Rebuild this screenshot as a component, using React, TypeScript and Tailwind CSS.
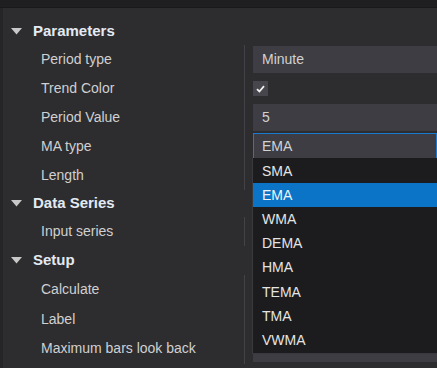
import React from "react";

type Row = { label: string; value?: React.ReactNode; h?: string };

const boxCls = "h-[27px] w-full bg-[#3e3d44] flex items-center pl-[9px] text-[14px] text-[#d2d2d2]";

function Caret() {
  return (
    <svg width="11" height="7" viewBox="0 0 11 7" className="shrink-0">
      <polygon points="0,0 11,0 5.5,6.5" fill="#c8c8c8" />
    </svg>
  );
}

function Header({ title, h = "h-[28px]" }: { title: string; h?: string }) {
  return (
    <div className={`${h} flex items-center pl-[8px]`}>
      <Caret />
      <span className="ml-[11px] text-[15px] font-bold text-[#e3eaf3]">{title}</span>
    </div>
  );
}

function PropRow({ label, value, h = "h-[29px]" }: Row) {
  return (
    <div className={`${h} flex`}>
      <div className="w-[242px] shrink-0 border-r border-[#424247] flex items-center pl-[38px] text-[14px] text-[#d0d0d0]">
        {label}
      </div>
      <div className="flex-1 flex items-center pl-[8px]">{value}</div>
    </div>
  );
}

const maTypes = ["SMA", "EMA", "WMA", "DEMA", "HMA", "TEMA", "TMA", "VWMA"];

export default function App() {
  return (
    <div className="relative w-[437px] h-[368px] overflow-hidden bg-[#2d2d30] font-['Liberation_Sans',Arial,sans-serif]">
      <div className="h-[8px] bg-[#1f1f21] border-b border-[#19191a]" />
      <div className="border-l-[3px] border-[#252527] h-[360px] pt-[9px]">
        <Header title="Parameters" />
        <PropRow label="Period type" value={<div className={boxCls}>Minute</div>} />
        <PropRow
          label="Trend Color"
          value={
            <div className="w-[15px] h-[15px] bg-[#47464c] flex items-center justify-center">
              <svg width="9" height="8" viewBox="0 0 9 8">
                <path d="M1 4.2 L3.4 6.5 L8 1.2" stroke="#f0f0f0" strokeWidth="1.8" fill="none" />
              </svg>
            </div>
          }
        />
        <PropRow label="Period Value" value={<div className={boxCls}>5</div>} />
        <PropRow
          label="MA type"
          value={
            <div className="h-[27px] w-full bg-[#3e3d44] border border-[#1a7bd0] flex items-center pl-[8px] text-[14px] text-[#d2d2d2]">
              EMA
            </div>
          }
        />
        <PropRow label="Length" value={<div className={boxCls} />} />
        <Header title="Data Series" h="h-[27px]" />
        <PropRow label="Input series" value={<div className={boxCls} />} />
        <Header title="Setup" h="h-[29px]" />
        <PropRow label="Calculate" h="h-[29.5px]" value={<div className={boxCls} />} />
        <PropRow label="Label" h="h-[29.5px]" value={<div className={boxCls} />} />
        <PropRow label="Maximum bars look back" h="h-[29.5px]" value={<div className={boxCls} />} />
      </div>

      <div className="absolute left-[252px] top-[158px] right-0 pt-[1px] bg-[#1c1c1e] border-l border-b border-[#3a3a3e]">
        {maTypes.map((t) => (
          <div
            key={t}
            className={
              t === "EMA"
                ? "h-[24.2px] flex items-center pl-[9px] text-[14px] text-[#eef3f8] bg-[#0c74c7]"
                : "h-[24.2px] flex items-center pl-[9px] text-[14px] text-[#e4e4e4]"
            }
          >
            {t}
          </div>
        ))}
      </div>
    </div>
  );
}
